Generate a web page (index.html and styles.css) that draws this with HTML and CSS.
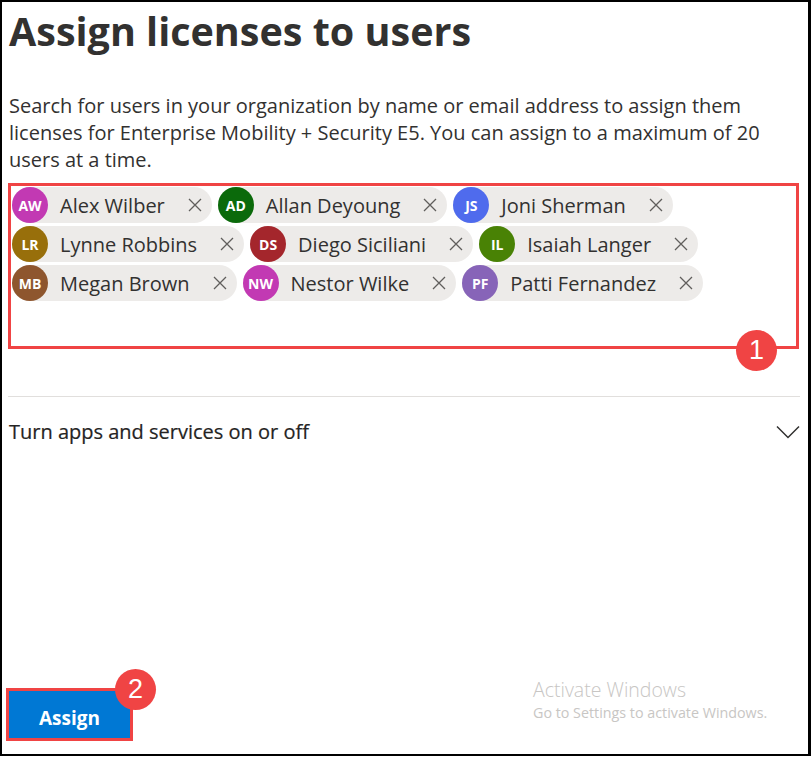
FILE: index.html
```html
<!DOCTYPE html>
<html lang="en">
<head>
<meta charset="utf-8">
<title>Assign licenses to users</title>
<link rel="stylesheet" href="styles.css">
</head>
<body>
<div class="frame">
  <h1 class="title">Assign licenses to users</h1>
  <p class="desc">Search for users in your organization by name or email address to assign them licenses for Enterprise Mobility + Security E5. You can assign to a maximum of 20 users at a time.</p>

  <div class="picker">
    <div class="chips">
      <div class="chip"><span class="avatar c-aw">AW</span><span class="name">Alex Wilber</span><svg class="x" viewBox="0 0 14 14"><path d="M1 1L13 13M13 1L1 13"/></svg></div>
      <div class="chip"><span class="avatar c-ad">AD</span><span class="name">Allan Deyoung</span><svg class="x" viewBox="0 0 14 14"><path d="M1 1L13 13M13 1L1 13"/></svg></div>
      <div class="chip"><span class="avatar c-js">JS</span><span class="name">Joni Sherman</span><svg class="x" viewBox="0 0 14 14"><path d="M1 1L13 13M13 1L1 13"/></svg></div>
      <div class="chip"><span class="avatar c-lr">LR</span><span class="name">Lynne Robbins</span><svg class="x" viewBox="0 0 14 14"><path d="M1 1L13 13M13 1L1 13"/></svg></div>
      <div class="chip"><span class="avatar c-ds">DS</span><span class="name">Diego Siciliani</span><svg class="x" viewBox="0 0 14 14"><path d="M1 1L13 13M13 1L1 13"/></svg></div>
      <div class="chip"><span class="avatar c-il">IL</span><span class="name">Isaiah Langer</span><svg class="x" viewBox="0 0 14 14"><path d="M1 1L13 13M13 1L1 13"/></svg></div>
      <div class="chip"><span class="avatar c-mb">MB</span><span class="name">Megan Brown</span><svg class="x" viewBox="0 0 14 14"><path d="M1 1L13 13M13 1L1 13"/></svg></div>
      <div class="chip"><span class="avatar c-nw">NW</span><span class="name">Nestor Wilke</span><svg class="x" viewBox="0 0 14 14"><path d="M1 1L13 13M13 1L1 13"/></svg></div>
      <div class="chip"><span class="avatar c-pf">PF</span><span class="name">Patti Fernandez</span><svg class="x" viewBox="0 0 14 14"><path d="M1 1L13 13M13 1L1 13"/></svg></div>
    </div>
    <span class="badge badge-1">1</span>
  </div>

  <div class="divider"></div>

  <div class="section">
    <span class="section-label">Turn apps and services on or off</span>
    <svg class="chevron" viewBox="0 0 24 14"><path d="M1 1.5L12 12.5L23 1.5"/></svg>
  </div>

  <div class="spacer"></div>

  <div class="footer">
    <div class="assign-wrap">
      <button class="assign">Assign</button>
      <span class="badge badge-2">2</span>
    </div>
  </div>

  <div class="watermark">
    <div class="wm-title">Activate Windows</div>
    <div class="wm-sub">Go to Settings to activate Windows.</div>
  </div>
</div>
</body>
</html>
```

FILE: styles.css
```css
* { box-sizing: border-box; }

html, body {
  margin: 0;
  padding: 0;
  background: #ffffff;
}

.frame {
  position: relative;
  width: 811px;
  height: 756px;
  border: 2px solid #000;
  border-right-width: 3px;
  padding: 0 8px 13px 6px;
  display: flex;
  flex-direction: column;
  font-family: "Open Sans", "Noto Sans", sans-serif;
  color: #323130;
}

.title {
  margin: 5px 0 0 1px;
  font-size: 39.5px;
  line-height: 48px;
  font-weight: 700;
  color: #323130;
}

.desc {
  margin: 37px 0 0 1px;
  font-size: 20px;
  line-height: 27px;
  color: #323130;
}

.picker {
  position: relative;
  margin-top: 10px;
  width: 791px;
  height: 166px;
  border: 3px solid #f04444;
  padding: 1px 0 0 1px;
}

.chips {
  display: flex;
  flex-wrap: wrap;
  column-gap: 6px;
  row-gap: 3px;
}

.chip {
  display: flex;
  align-items: center;
  height: 36px;
  background: #edebe9;
  border-radius: 18px;
  padding-right: 10px;
}

.avatar {
  width: 36px;
  height: 36px;
  border-radius: 50%;
  display: flex;
  align-items: center;
  justify-content: center;
  color: #fff;
  font-size: 14px;
  font-weight: 700;
}

.c-aw, .c-nw { background: #c239b3; }
.c-ad { background: #0b6a0b; }
.c-js { background: #4f6bed; }
.c-lr { background: #986f0b; }
.c-ds { background: #a4262c; }
.c-il { background: #498205; }
.c-mb { background: #8e562e; }
.c-pf { background: #8764b8; }

.name {
  margin-left: 12px;
  font-size: 20px;
  color: #323130;
  white-space: nowrap;
}

.x {
  width: 14px;
  height: 14px;
  margin-left: 23px;
  fill: none;
  stroke: #605e5c;
  stroke-width: 1.3;
}

.badge {
  position: absolute;
  width: 41px;
  height: 41px;
  border-radius: 50%;
  background: #f04444;
  color: #fff;
  font-family: "Liberation Sans", Arial, sans-serif;
  font-size: 27px;
  line-height: 41px;
  text-align: center;
}

.badge-1 {
  left: 725px;
  top: 144px;
}

.divider {
  margin-top: 47px;
  height: 1px;
  background: #e1dfdd;
}

.section {
  margin-top: 21px;
  display: flex;
  align-items: center;
  justify-content: space-between;
  padding-left: 1px;
}

.section-label {
  font-size: 20px;
  font-weight: 400;
  line-height: 28px;
  color: #252423;
  -webkit-text-stroke: 0.2px #252423;
}

.chevron {
  width: 24px;
  height: 14px;
  fill: none;
  stroke: #323130;
  stroke-width: 1.5;
}

.spacer { flex: 1; }

.footer {
  display: flex;
}

.assign-wrap {
  position: relative;
  margin-left: -2px;
  border: 3px solid #f04444;
}

.assign {
  display: block;
  width: 121px;
  height: 47px;
  border: 0;
  margin: 0;
  background: #0078d4;
  color: #fff;
  font-family: "Open Sans", "Noto Sans", sans-serif;
  font-size: 19px;
  font-weight: 700;
  padding: 6px 0 0;
}

.badge-2 {
  left: 106px;
  top: -22px;
}

.watermark {
  position: absolute;
  left: 531px;
  top: 675px;
  color: #c8c6c4;
  pointer-events: none;
}

.wm-title {
  font-size: 19.5px;
  font-weight: 300;
  line-height: 26px;
}

.wm-sub {
  font-size: 14.3px;
  line-height: 20px;
}
```
